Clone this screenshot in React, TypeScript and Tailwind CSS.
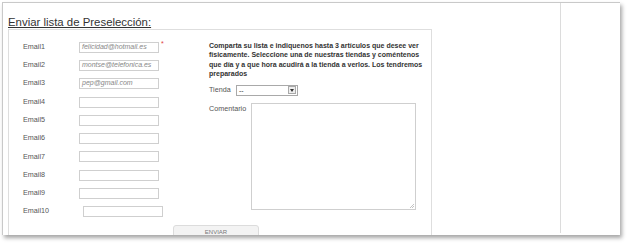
import React from "react";

const emails: { label: string; value: string; shift?: boolean }[] = [
  { label: "Email1", value: "felicidad@hotmail.es" },
  { label: "Email2", value: "montse@telefonica.es" },
  { label: "Email3", value: "pep@gmail.com" },
  { label: "Email4", value: "" },
  { label: "Email5", value: "" },
  { label: "Email6", value: "" },
  { label: "Email7", value: "" },
  { label: "Email8", value: "" },
  { label: "Email9", value: "" },
  { label: "Email10", value: "", shift: true },
];

export default function App() {
  return (
    <div
      className="w-[633px] h-[251px] bg-white overflow-hidden"
      style={{ fontFamily: '"Liberation Sans", Arial, sans-serif' }}
    >
      <div className="ml-[2px] mt-[2px] w-[618px] h-[233px] bg-white border-l border-t border-[#c9c9c9] shadow-[2px_3px_4px_rgba(0,0,0,0.35)] flex overflow-hidden">
        <div className="w-[557px] pl-[5px] flex flex-col">
          <div className="h-[26px] pt-[6px]">
            <span className="text-[11.4px] leading-[13px] text-[#333] underline">
              Enviar lista de Preselección:
            </span>
          </div>
          <div className="w-[424px] flex-1 border border-b-0 border-[#dedede] flex flex-col pl-[14px] pt-[8px]">
            <div className="flex">
              <div className="w-[186px] flex flex-col">
                {emails.map((e, i) => (
                  <div key={e.label} className="h-[18.3px] flex items-center">
                    <div className="w-[56px] text-[7.2px] text-[#555]">{e.label}</div>
                    <div
                      className={`${e.shift ? "ml-[4px]" : ""} w-[80px] h-[11px] border border-[#cfcfcf] bg-white flex items-center px-[2px] text-[7px] italic text-[#888]`}
                    >
                      {e.value}
                    </div>
                    {i === 0 && (
                      <span className="ml-[2px] -mt-[6px] text-[7px] text-[#e04040]">*</span>
                    )}
                  </div>
                ))}
              </div>
              <div className="flex flex-col pt-[3px]">
                <p className="w-[216px] text-[7px] leading-[9.4px] font-bold text-[#333]">
                  Comparta su lista e indiquenos hasta 3 artículos que desee ver
                  físicamente. Seleccione una de nuestras tiendas y coméntenos
                  que día y a que hora acudirá a la tienda a verlos. Los tendremos
                  preparados
                </p>
                <div className="flex items-center mt-[6px] h-[11px]">
                  <span className="w-[27px] text-[7.2px] text-[#555]">Tienda</span>
                  <div className="w-[62px] h-[11px] border border-[#a9a9a9] bg-white flex items-center justify-between pl-[2px] pr-[1px]">
                    <span className="text-[7px] text-[#333] leading-none">--</span>
                    <div className="w-[8px] h-[8px] border border-[#a9a9a9] bg-[#eee] flex items-center justify-center">
                      <svg width="4" height="3" viewBox="0 0 4 3">
                        <path d="M0 0 L4 0 L2 3 Z" fill="#333" />
                      </svg>
                    </div>
                  </div>
                </div>
                <div className="flex mt-[7px]">
                  <span className="w-[42px] text-[7.2px] text-[#555] pt-[1px]">Comentario</span>
                  <div className="relative w-[165px] h-[107px] border border-[#cfcfcf] bg-white">
                    <svg className="absolute right-[1px] bottom-[1px]" width="5" height="5" viewBox="0 0 5 5">
                      <path d="M5 1 L1 5 M5 3 L3 5" stroke="#aaa" strokeWidth="0.7" />
                    </svg>
                  </div>
                </div>
              </div>
            </div>
            <div className="pl-[150px] mt-[4px]">
              <div className="w-[86px] h-[14px] bg-[#f3f3f3] border border-[#dcdcdc] rounded-t-[3px] flex justify-center pt-[3px]">
                <span className="text-[6px] text-[#777] leading-none">ENVIAR</span>
              </div>
            </div>
          </div>
        </div>
        <div className="flex-1 border-l border-[#dcdcdc] mb-[2px]" />
      </div>
    </div>
  );
}
